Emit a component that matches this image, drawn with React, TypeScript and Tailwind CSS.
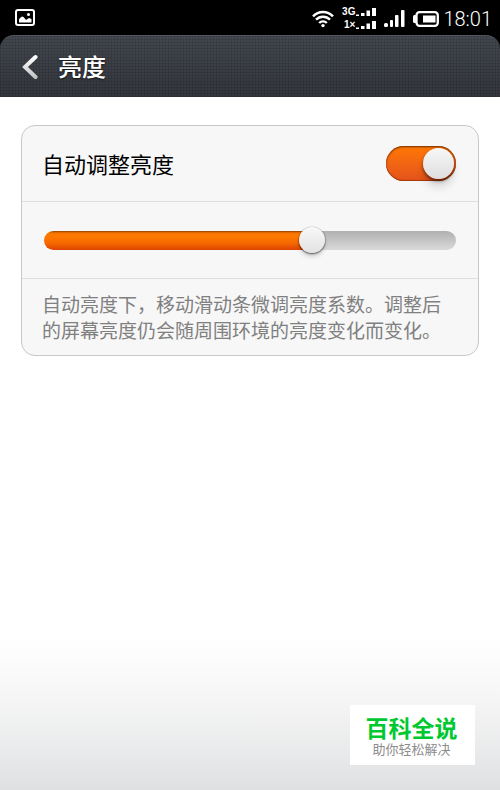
import { useState } from "react";

function PictureIcon() {
  return (
    <svg width="20" height="18" viewBox="0 0 20 18" fill="none" aria-hidden="true">
      <rect x="1" y="1" width="18" height="15" rx="2" stroke="white" strokeWidth="2" />
      <path d="M4 13.5v-3l1-1.500 2-1.500 1.500.5 2.500 3 3-2 2.500 1v3.500z" fill="white" />
      <circle cx="13.500" cy="5.500" r="1.500" fill="white" />
    </svg>
  );
}

function WifiIcon() {
  return (
    <svg width="22" height="18" viewBox="0 0 22 18" fill="none" stroke="white" strokeWidth="2.4" aria-hidden="true">
      <path d="M1 6.3C6.5.5 15.5.5 21 6.3" />
      <path d="M4 9.7c3.8-4 10.2-4 14 0" />
      <path d="M7.2 13c2-2.2 5.6-2.2 7.6 0" />
      <circle cx="11" cy="15.6" r="1.7" fill="white" stroke="none" />
    </svg>
  );
}

function SmallBars() {
  return (
    <svg width="20" height="8" viewBox="0 0 20 8" fill="white" aria-hidden="true">
      <path d="M0 6.500h3V8H0zM5 5h3.500v3H5zM10.500 2.500H14V8h-3.500zM16 0h4v8h-4z" />
    </svg>
  );
}

function SignalIcon() {
  return (
    <svg width="21" height="17" viewBox="0 0 21 17" fill="white" aria-hidden="true">
      <rect x="0" y="13" width="4" height="4" rx="1.5" />
      <rect x="6" y="10" width="3" height="7" rx="1" />
      <rect x="11" y="5" width="3.5" height="12" rx="1" />
      <rect x="17" y="0" width="3.5" height="17" rx="1" />
    </svg>
  );
}

function BatteryIcon() {
  return (
    <svg width="26" height="16" viewBox="0 0 26 16" aria-hidden="true">
      <rect x="0" y="4" width="4" height="8" rx="1.5" fill="white" />
      <rect x="3.5" y="1.2" width="21.300" height="13.600" rx="3" fill="none" stroke="white" strokeWidth="2.300" />
      <rect x="10" y="4.500" width="12.500" height="7" fill="white" />
    </svg>
  );
}

function NetworkRow({ name }: { name: string }) {
  return (
    <div className="flex h-[13px] items-center justify-end gap-px">
      <span className="text-[10px] leading-none font-bold">{name}</span>
      <SmallBars />
    </div>
  );
}

function StatusBar() {
  return (
    <div className="flex h-[35px] items-center bg-black pr-2 pl-[15px] text-white">
      <PictureIcon />
      <div className="ml-auto flex items-center pt-[2px]">
        <WifiIcon />
        <div className="ml-1 w-[38px] font-['Liberation_Sans',sans-serif]">
          <NetworkRow name="3G" />
          <NetworkRow name="1×" />
        </div>
        <div className="ml-2">
          <SignalIcon />
        </div>
        <div className="mr-1 ml-2">
          <BatteryIcon />
        </div>
        <time className="font-[Roboto,sans-serif] text-[20px] leading-none font-light">18:01</time>
      </div>
    </div>
  );
}

function Header() {
  return (
    <header className="bg-black">
      <div className="h-[62px] rounded-t-[14px] border-t border-[#51555c] bg-[repeating-linear-gradient(90deg,#0000001a_0_1px,transparent_1px_3px),repeating-linear-gradient(0deg,#0000001a_0_1px,transparent_1px_3px),linear-gradient(#43474f,#33363c)]">
        <div className="flex h-full items-center pl-[22px] text-white">
          <button type="button" aria-label="返回" className="mr-5">
            <svg width="16" height="26" viewBox="0 0 16 26" fill="none" aria-hidden="true">
              <defs>
                <linearGradient id="chevron" x1="0" y1="0" x2="0" y2="1">
                  <stop offset="0" stopColor="#ffffff" />
                  <stop offset="1" stopColor="#c4c4c4" />
                </linearGradient>
              </defs>
              <path d="M13.500 3 3 13l10.500 10" stroke="url(#chevron)" strokeWidth="4" strokeLinecap="round" />
            </svg>
          </button>
          <h1 className="pb-[2px] text-[24px] leading-none font-medium [text-shadow:0_1px_2px_#000000aa]">亮度</h1>
        </div>
      </div>
    </header>
  );
}

function Toggle({ id, checked, onChange }: { id: string; checked: boolean; onChange: (v: boolean) => void }) {
  return (
    <input
      id={id}
      type="checkbox"
      role="switch"
      checked={checked}
      onChange={(e) => onChange(e.target.checked)}
      className="flex h-[35px] w-[70px] appearance-none items-center rounded-full bg-linear-to-b from-[#c4c4c4] to-[#dcdcdc] px-[2px] shadow-[inset_0_1px_2px_#00000099] before:size-[31px] before:rounded-full before:bg-linear-to-b before:from-[#f8f8f8] before:to-[#dedede] before:shadow-[0_2px_3px_#00000088,0_8px_8px_#00000022] checked:justify-end checked:from-[#ff7800] checked:to-[#e4521b] checked:shadow-[inset_0_1px_2px_#6b2a00,inset_0_-1px_1px_#a83a08]"
    />
  );
}

function Slider({ value, onChange }: { value: number; onChange: (v: number) => void }) {
  return (
    <input
      type="range"
      min={0}
      max={100}
      value={value}
      aria-label="亮度"
      onChange={(e) => onChange(Number(e.target.value))}
      style={{ backgroundSize: `${value}% 100%, 100% 100%` }}
      className="block h-[19px] w-full appearance-none rounded-full bg-[linear-gradient(#8a4200_0,#f87400_2px,#ff7900_5px,#f66a00_12px,#dd4300),linear-gradient(#b0b0b0,#dadada)] bg-no-repeat [&::-webkit-slider-thumb]:size-[26px] [&::-webkit-slider-thumb]:appearance-none [&::-webkit-slider-thumb]:rounded-full [&::-webkit-slider-thumb]:bg-linear-to-b [&::-webkit-slider-thumb]:from-[#f8f8f8] [&::-webkit-slider-thumb]:to-[#e2e2e2] [&::-webkit-slider-thumb]:shadow-[0_0_1px_#00000088,0_1px_2px_#00000099,0_4px_4px_#00000022]"
    />
  );
}

export default function App() {
  const [auto, setAuto] = useState(true);
  const [level, setLevel] = useState(66);

  return (
    <div
      lang="zh-CN"
      className="relative min-h-screen bg-[linear-gradient(to_top,#dfe0e2,#e8e9ea_35px,#f6f6f6_95px,#fdfdfd_135px,#ffffff_160px)] font-['Noto_Sans_CJK_SC',sans-serif]"
    >
      <StatusBar />
      <Header />
      <main className="px-[21px] pt-7">
        <section className="divide-y divide-[#dedede] rounded-[14px] border border-[#c8c8c8] bg-[#f7f7f7]">
          <div className="flex h-[76px] items-center justify-between pr-[22px] pb-px pl-5">
            <label htmlFor="auto-brightness" className="text-[22px] leading-8 text-black">
              自动调整亮度
            </label>
            <Toggle id="auto-brightness" checked={auto} onChange={setAuto} />
          </div>
          <div className="flex h-[77px] items-center px-[22px]">
            <Slider value={level} onChange={setLevel} />
          </div>
          <p className="px-5 py-3 text-[19px] leading-[26px] text-[#808080]">
            自动亮度下，移动滑动条微调亮度系数。调整后
            <br />
            的屏幕亮度仍会随周围环境的亮度变化而变化。
          </p>
        </section>
      </main>
      <aside className="absolute right-[25px] bottom-[25px] flex h-[60px] w-[125px] flex-col items-center justify-center bg-white pt-1 pr-[2px]">
        <strong className="text-[23px] leading-6 font-bold text-[#00c831]">百科全说</strong>
        <span className="text-[13px] leading-5 text-[#8c8c8c]">助你轻松解决</span>
      </aside>
    </div>
  );
}
